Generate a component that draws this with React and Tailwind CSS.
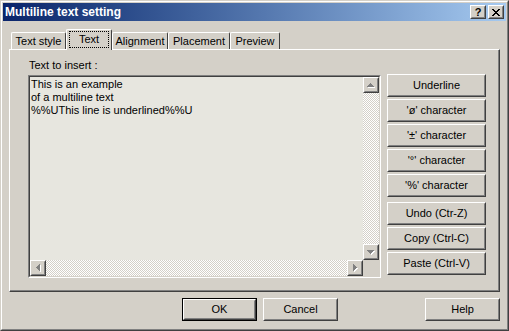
import React from 'react';

const FONT = "font-['Liberation_Sans',Arial,sans-serif]";

function Raised({ className = '', innerClassName = '', children }) {
  return (
    <div className={`border border-t-white border-l-white border-r-[#404040] border-b-[#404040] bg-[#d4d0c8] ${className}`}>
      <div className={`w-full h-full border border-t-[#d4d0c8] border-l-[#d4d0c8] border-r-[#808080] border-b-[#808080] flex items-center justify-center ${innerClassName}`}>
        {children}
      </div>
    </div>
  );
}

const ARROWS = {
  up: { w: 7, h: 4, d: 'M3 0h1v1H3z M2 1h3v1H2z M1 2h5v1H1z M0 3h7v1H0z' },
  down: { w: 7, h: 4, d: 'M0 0h7v1H0z M1 1h5v1H1z M2 2h3v1H2z M3 3h1v1H3z' },
  left: { w: 4, h: 7, d: 'M0 3h1v1H0z M1 2h1v3H1z M2 1h1v5H2z M3 0h1v7H3z' },
  right: { w: 4, h: 7, d: 'M3 3h1v1H3z M2 2h1v3H2z M1 1h1v5H1z M0 0h1v7H0z' },
};

function ArrowButton({ dir }) {
  const a = ARROWS[dir];
  return (
    <Raised className="w-[16px] h-[16px] shrink-0">
      <svg width={a.w + 1} height={a.h + 1} viewBox={`0 0 ${a.w + 1} ${a.h + 1}`} shapeRendering="crispEdges">
        <path d={a.d} fill="#ffffff" transform="translate(1 1)" />
        <path d={a.d} fill="#808080" />
      </svg>
    </Raised>
  );
}

const TRACK = 'bg-[image:repeating-conic-gradient(#ffffff_0%_25%,#d4d0c8_0%_50%)] bg-[length:2px_2px]';

function Tab({ label, width, active }) {
  if (active) {
    return (
      <div
        className="relative z-10 -mb-px h-[21px] bg-[#d4d0c8] border-l border-t border-r border-l-white border-t-white border-r-[#404040] rounded-t-[2px] flex justify-center pt-px shrink-0"
        style={{ width }}
      >
        <div className="h-[17px] w-[40px] border border-dotted border-black flex items-start justify-center pt-px">
          {label}
        </div>
      </div>
    );
  }
  return (
    <div
      className="h-[17px] border-l border-t border-r border-l-white border-t-white border-r-[#404040] rounded-t-[2px] flex items-center justify-center shrink-0"
      style={{ width }}
    >
      {label}
    </div>
  );
}

function Btn({ label, className = '' }) {
  return <Raised className={`w-[99px] h-[23px] ${className}`}>{label}</Raised>;
}

export default function App() {
  return (
    <div className={`w-[509px] h-[331px] border border-t-[#d4d0c8] border-l-[#d4d0c8] border-r-[#404040] border-b-[#404040] bg-[#d4d0c8] text-[11px] leading-[13px] text-black ${FONT}`}>
      <div className="w-full h-full border border-t-white border-l-white border-r-[#808080] border-b-[#808080] p-px flex flex-col">
        {/* Title bar */}
        <div className="h-[18px] shrink-0 flex items-center bg-linear-to-r from-[#0a246a] to-[#a6caf0] pl-[2px] pr-[2px]">
          <span className="flex-1 font-bold text-[12px] text-white">Multiline text setting</span>
          <Raised className="w-[16px] h-[14px]">
            <span className="font-bold text-[11px] leading-[11px]">?</span>
          </Raised>
          <Raised className="w-[16px] h-[14px] ml-[2px]">
            <svg width="8" height="7" viewBox="0 0 8 7" shapeRendering="crispEdges">
              <path d="M0 0h2v1H0z M6 0h2v1H6z M1 1h2v1H1z M5 1h2v1H5z M2 2h4v1H2z M3 3h2v1H3z M2 4h4v1H2z M1 5h2v1H1z M5 5h2v1H5z M0 6h2v1H0z M6 6h2v1H6z" fill="#000000" />
            </svg>
          </Raised>
        </div>

        {/* Tabs */}
        <div className="mt-[8px] ml-[6px] pl-[2px] h-[20px] flex items-end shrink-0">
          <Tab label="Text style" width={55} />
          <Tab label="Text" width={46} active />
          <Tab label="Alignment" width={56} />
          <Tab label="Placement" width={62} />
          <Tab label="Preview" width={50} />
        </div>

        {/* Tab panel */}
        <div className="ml-[6px] w-[491px] h-[243px] shrink-0 border border-t-white border-l-white border-r-[#404040] border-b-[#404040]">
          <div className="w-full h-full border-r border-b border-r-[#808080] border-b-[#808080] flex pl-[18px]">
            <div className="flex flex-col pt-[9px]">
              <div className="ml-px">Text to insert :</div>
              <div className="mt-[3px] w-[353px] h-[203px] border border-t-[#808080] border-l-[#808080] border-r-white border-b-white">
                <div className="w-full h-full border border-t-[#404040] border-l-[#404040] border-r-[#d4d0c8] border-b-[#d4d0c8] flex flex-col">
                  <div className="flex flex-1 min-h-0">
                    <div className="flex-1 bg-[#e7e6df] pl-px pt-px">
                      <div>This is an example</div>
                      <div>of a multiline text</div>
                      <div>%%UThis line is underlined%%U</div>
                    </div>
                    <div className="w-[16px] flex flex-col">
                      <ArrowButton dir="up" />
                      <div className={`flex-1 ${TRACK}`} />
                      <ArrowButton dir="down" />
                    </div>
                  </div>
                  <div className="h-[16px] flex shrink-0">
                    <ArrowButton dir="left" />
                    <div className={`flex-1 ${TRACK}`} />
                    <ArrowButton dir="right" />
                    <div className="w-[16px] bg-[#d4d0c8]" />
                  </div>
                </div>
              </div>
            </div>

            <div className="ml-[6px] pt-[24px] flex flex-col">
              <Btn label="Underline" />
              <Btn label="'ø' character" className="mt-[2px]" />
              <Btn label="'±' character" className="mt-[2px]" />
              <Btn label="'°' character" className="mt-[2px]" />
              <Btn label="'%' character" className="mt-[2px]" />
              <Btn label="Undo (Ctr-Z)" className="mt-[5px]" />
              <Btn label="Copy (Ctrl-C)" className="mt-[2px]" />
              <Btn label="Paste (Ctrl-V)" className="mt-[2px]" />
            </div>
          </div>
        </div>

        {/* Dialog buttons */}
        <div className="mt-[6px] pl-[179px] flex shrink-0">
          <div className="w-[75px] h-[23px] border border-black">
            <Raised className="w-full h-full">OK</Raised>
          </div>
          <Raised className="w-[75px] h-[23px] ml-[6px]">Cancel</Raised>
          <Raised className="w-[75px] h-[23px] ml-[87px]">Help</Raised>
        </div>
      </div>
    </div>
  );
}
